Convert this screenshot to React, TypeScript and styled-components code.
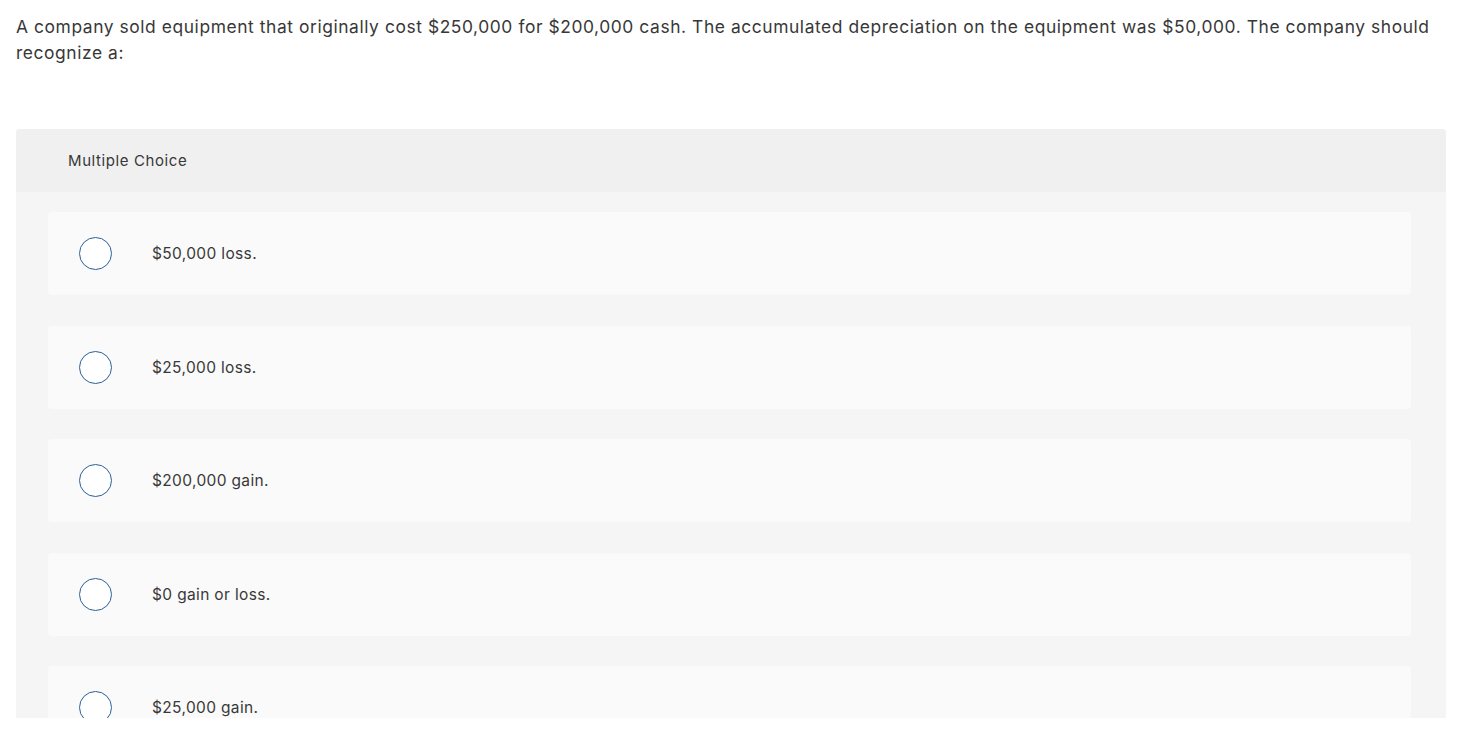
import React from "react";
import styled, { createGlobalStyle } from "styled-components";

const Global = createGlobalStyle`
  html, body { margin: 0; padding: 0; background: #fff; }
  body { font-family: Inter, "Noto Sans", Arial, sans-serif; color: #333; }
`;

const Page = styled.div`
  height: 718px;
  overflow: hidden;
  padding: 14px 27px 0 16px;
  box-sizing: border-box;
`;

const Question = styled.p`
  margin: 0;
  font-size: 17.4px;
  line-height: 26px;
  color: #383838;
  letter-spacing: 0.58px;
`;

const Panel = styled.section`
  margin-top: 63px;
  border-radius: 4px 4px 0 0;
  background: #f5f5f5;
  overflow: hidden;
`;

const PanelHeader = styled.div`
  height: 63px;
  background: #f0f0f0;
  display: flex;
  align-items: center;
  padding-left: 52px;
  font-size: 15px;
  letter-spacing: 0.6px;
  color: #383838;
`;

const Options = styled.div`
  display: flex;
  flex-direction: column;
  gap: 30.5px;
  padding: 20px 35px 20px 32px;
`;

const Option = styled.label`
  height: 83px;
  background: #fafafa;
  border-radius: 4px;
  display: flex;
  align-items: center;
  padding-left: 31px;
  font-size: 15.5px;
  letter-spacing: 0.35px;
  color: #383838;
  cursor: pointer;
`;

const Radio = styled.span`
  width: 31px;
  height: 31px;
  border: 1.5px solid #2b5f99;
  border-radius: 50%;
  background: #fff;
  flex-shrink: 0;
  margin-right: 40px;
`;

const choices = [
  "$50,000 loss.",
  "$25,000 loss.",
  "$200,000 gain.",
  "$0 gain or loss.",
  "$25,000 gain.",
];

export default function App() {
  return (
    <>
      <Global />
      <Page>
        <Question>
          A company sold equipment that originally cost $250,000 for $200,000 cash. The accumulated depreciation on the equipment was $50,000. The company should recognize a:
        </Question>
        <Panel>
          <PanelHeader>Multiple Choice</PanelHeader>
          <Options>
            {choices.map((c) => (
              <Option key={c}>
                <Radio />
                {c}
              </Option>
            ))}
          </Options>
        </Panel>
      </Page>
    </>
  );
}
